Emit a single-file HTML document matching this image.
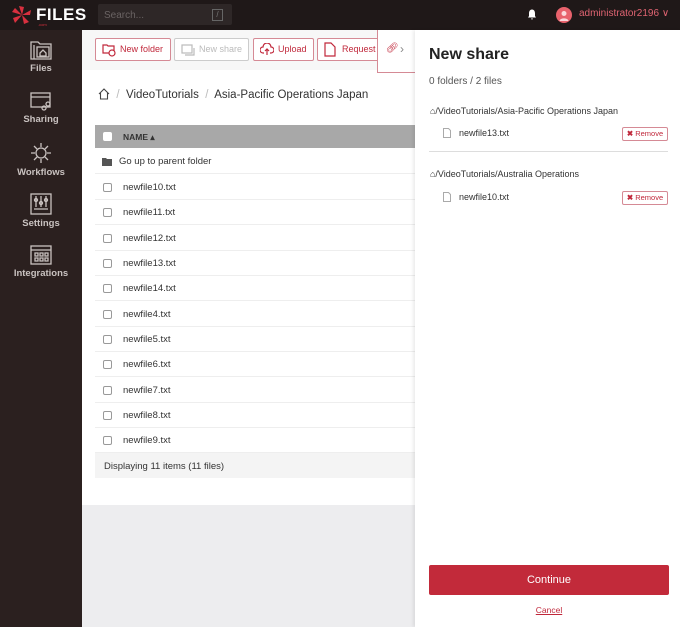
<!DOCTYPE html>
<html><head><meta charset="utf-8"><style>
*{box-sizing:border-box;margin:0;padding:0}
body{width:680px;height:627px;overflow:hidden;font-family:"Liberation Sans",sans-serif;background:#ededef;position:relative;color:#333}
.top{position:absolute;left:0;top:0;width:680px;height:30px;background:#1f1818}
.side{position:absolute;left:0;top:30px;width:82px;height:597px;background:#2b201f}
.nav{position:absolute;left:0;width:82px;text-align:center;color:#c9c2c0;font-size:9.5px;font-weight:bold}
.nav svg{display:block;margin:0 auto 3px}
.main{position:absolute;left:82px;top:30px;width:333px;height:475px;background:#fff}
.tb{position:absolute;left:0;top:0;width:333px;height:40px;background:#f7f7f7}
.btn{position:absolute;top:8px;height:23px;border:1px solid #d58a95;border-radius:2px;background:#fff;color:#c0283b;font-size:9px;line-height:21px;padding-left:24px}
.crumb{position:absolute;left:16px;top:58px;font-size:11.5px;color:#333}
.th{position:absolute;left:13px;top:95px;width:320px;height:23px;background:#a8a8a8}
.row{position:absolute;left:13px;width:320px;height:25px;border-bottom:1px solid #eee;font-size:9.5px;color:#333}
.cb{position:absolute;left:8px;top:8px;width:9px;height:9px;border:1px solid #999;border-radius:2px;background:#fff}
.row span{position:absolute;left:28px;top:7px}
.foot{position:absolute;left:13px;top:422px;width:320px;height:25px;background:#f4f4f4;font-size:9.5px;padding:8px 9px}
.panel{position:absolute;left:415px;top:30px;width:265px;height:597px;background:#fff;box-shadow:-2px 0 3px rgba(0,0,0,.08)}
.rm{position:absolute;right:12px;width:46px;height:14px;border:1px solid #d58a95;border-radius:2px;font-size:7.5px;color:#c0283b;line-height:12px;text-align:center}
</style></head><body>
<div class="top">
<svg style="position:absolute;left:11px;top:5px" width="22" height="20" viewBox="0 0 22 20"><g fill="#d8303f"><path d="M11 10L8 1 13 2z"/><path d="M11 10L20 5 19 10z"/><path d="M11 10L18 17 13 19z"/><path d="M11 10L4 18 2 13z"/><path d="M11 10L1 7 4 3z"/></g></svg>
<div style="position:absolute;left:36px;top:5px;color:#fff;font-weight:bold;font-size:17px;letter-spacing:.5px">FILES</div>
<div style="position:absolute;left:38px;top:22px;color:#d8303f;font-size:4px">.com</div>
<div style="position:absolute;left:98px;top:4px;width:134px;height:21px;background:#2e2727;border-radius:2px;color:#6a6363;font-size:10px;padding:6px 6px">Search...</div>
<div style="position:absolute;left:212px;top:9px;width:11px;height:12px;border:1px solid #666;color:#777;font-size:8px;text-align:center;line-height:10px">/</div>
<svg style="position:absolute;left:527px;top:9px" width="10" height="11" viewBox="0 0 10 11"><path d="M5 0.5C2.8 0.5 2 2.5 2 4.5V7L1 8.5H9L8 7V4.5C8 2.5 7.2.5 5 .5z M4 9.5h2a1 1 0 0 1-2 0z" fill="#fff"/></svg>
<div style="position:absolute;left:556px;top:7px;width:16px;height:16px;border-radius:50%;background:#e8626c"></div>
<svg style="position:absolute;left:559px;top:10px" width="10" height="11" viewBox="0 0 10 11"><circle cx="5" cy="3.5" r="2.5" fill="#fbd8db"/><path d="M0.5 11C1 7.5 9 7.5 9.5 11z" fill="#fbd8db"/></svg>
<div style="position:absolute;left:579px;top:8px;color:#e06472;font-size:10px">administrator2196 ∨</div>
</div>
<div class="side">
<div class="nav" style="top:10px"><svg width="22" height="20" viewBox="0 0 22 20" fill="none" stroke="#c9c2c0" stroke-width="1.3"><path d="M1 2h7l2 2h11v15H1z"/><path d="M4 5v14"/><rect x="7" y="7" width="12" height="10"/><path d="M10 13l3-3 3 3v3h-6z"/></svg>Files</div>
<div class="nav" style="top:61px"><svg width="22" height="20" viewBox="0 0 22 20" fill="none" stroke="#c9c2c0" stroke-width="1.3"><rect x="1" y="2" width="19" height="14"/><path d="M1 6h19"/><circle cx="14" cy="17" r="2"/><circle cx="18" cy="13" r="2"/></svg>Sharing</div>
<div class="nav" style="top:112px"><svg width="22" height="22" viewBox="0 0 22 22" fill="none" stroke="#c9c2c0" stroke-width="1.3"><circle cx="11" cy="11" r="5"/><path d="M11 1v4M11 17v4M1 11h4M17 11h4M4 4l3 3M15 15l3 3M4 18l3-3M15 7l3-3"/></svg>Workflows</div>
<div class="nav" style="top:163px"><svg width="22" height="22" viewBox="0 0 22 22" fill="none" stroke="#c9c2c0" stroke-width="1.3"><rect x="1" y="1" width="20" height="20"/><path d="M6 3v11M11 3v11M16 3v11M4 16h14"/><circle cx="6" cy="7" r="1.5"/><circle cx="11" cy="10" r="1.5"/><circle cx="16" cy="7" r="1.5"/></svg>Settings</div>
<div class="nav" style="top:215px"><svg width="22" height="20" viewBox="0 0 22 20" fill="none" stroke="#c9c2c0" stroke-width="1.3"><rect x="1" y="1" width="20" height="18"/><path d="M1 5h20M5 8h3v3H5zM10 8h3v3h-3zM15 8h3v3h-3zM5 13h3v3H5zM10 13h3v3h-3zM15 13h3v3h-3z"/></svg>Integrations</div>
</div>
<div class="main">
<div class="tb"></div>
<div class="btn" style="left:13px;width:76px"><svg style="position:absolute;left:6px;top:4px" width="14" height="14" viewBox="0 0 14 14" fill="none" stroke="#c0283b" stroke-width="1.2"><path d="M1 2h4l1 1h6v7H1z"/><circle cx="10" cy="10" r="3" fill="#fff"/></svg>New folder</div>
<div class="btn" style="left:92px;width:75px;border-color:#ccc;color:#bbb"><svg style="position:absolute;left:6px;top:4px" width="14" height="14" viewBox="0 0 14 14" fill="none" stroke="#bbb" stroke-width="1.2"><rect x="1" y="2" width="10" height="8"/><path d="M4 12h9V5"/></svg>New share</div>
<div class="btn" style="left:171px;width:61px"><svg style="position:absolute;left:6px;top:4px" width="14" height="14" viewBox="0 0 14 14" fill="none" stroke="#c0283b" stroke-width="1.2"><path d="M4 10H3a3 3 0 0 1 0-6 4 4 0 0 1 8 0 3 3 0 0 1 0 6h-1M7 12V6M5 8l2-2 2 2"/></svg>Upload</div>
<div class="btn" style="left:235px;width:62px"><svg style="position:absolute;left:6px;top:3px" width="12" height="15" viewBox="0 0 12 15" fill="none" stroke="#c0283b" stroke-width="1.2"><path d="M1 1h6l4 4v9H1z"/></svg>Request</div>
<div class="crumb"><svg style="vertical-align:-2px" width="12" height="12" viewBox="0 0 12 12" fill="none" stroke="#444" stroke-width="1.1"><path d="M1 6L6 1l5 5M2.5 5v6h7V5"/></svg>&nbsp; <span style="color:#bbb">/</span>&nbsp; VideoTutorials &nbsp;<span style="color:#bbb">/</span>&nbsp; Asia-Pacific Operations Japan</div>
<div class="th"><div class="cb" style="top:7px;border-color:#fff"></div><span style="position:absolute;left:28px;top:7px;font-size:8.5px;font-weight:bold;color:#333">NAME ▴</span></div>
<div class="row" style="top:119px"><svg style="position:absolute;left:7px;top:8px" width="10" height="9" viewBox="0 0 10 9"><path d="M0 1h4l1 1h5v7H0z" fill="#555"/></svg><span style="left:24px">Go up to parent folder</span></div>
<div class="row" style="top:145px"><div class="cb"></div><span>newfile10.txt</span></div>
<div class="row" style="top:170px"><div class="cb"></div><span>newfile11.txt</span></div>
<div class="row" style="top:196px"><div class="cb"></div><span>newfile12.txt</span></div>
<div class="row" style="top:221px"><div class="cb"></div><span>newfile13.txt</span></div>
<div class="row" style="top:246px"><div class="cb"></div><span>newfile14.txt</span></div>
<div class="row" style="top:272px"><div class="cb"></div><span>newfile4.txt</span></div>
<div class="row" style="top:297px"><div class="cb"></div><span>newfile5.txt</span></div>
<div class="row" style="top:322px"><div class="cb"></div><span>newfile6.txt</span></div>
<div class="row" style="top:348px"><div class="cb"></div><span>newfile7.txt</span></div>
<div class="row" style="top:373px"><div class="cb"></div><span>newfile8.txt</span></div>
<div class="row" style="top:398px"><div class="cb"></div><span>newfile9.txt</span></div>
<div class="foot" style="top:423px">Displaying 11 items (11 files)</div>
</div>
<div style="position:absolute;left:377px;top:30px;width:40px;height:43px;background:#fff;border-left:1px solid #d58a95;border-bottom:1px solid #d58a95"><span style="position:absolute;left:8px;top:13px;color:#c0283b;font-size:10px">🔗︎</span><span style="position:absolute;left:22px;top:12px;color:#888;font-size:12px">›</span></div>
<div class="panel">
<div style="position:absolute;left:14px;top:16px;font-size:16px;font-weight:bold;color:#222">New share</div>
<div style="position:absolute;left:14px;top:46px;font-size:10px;color:#555">0 folders / 2 files</div>
<div style="position:absolute;left:15px;top:76px;font-size:9px;color:#333">⌂/VideoTutorials/Asia-Pacific Operations Japan</div>
<svg style="position:absolute;left:28px;top:98px" width="8" height="10" viewBox="0 0 8 10" fill="none" stroke="#aaa"><path d="M.5.5h5l2 2v7h-7z"/></svg>
<div style="position:absolute;left:44px;top:98px;font-size:9px;color:#333">newfile13.txt</div>
<div class="rm" style="top:97px"><b>✖</b> Remove</div>
<div style="position:absolute;left:14px;top:121px;width:239px;border-top:1px solid #ddd"></div>
<div style="position:absolute;left:15px;top:139px;font-size:9px;color:#333">⌂/VideoTutorials/Australia Operations</div>
<svg style="position:absolute;left:28px;top:162px" width="8" height="10" viewBox="0 0 8 10" fill="none" stroke="#aaa"><path d="M.5.5h5l2 2v7h-7z"/></svg>
<div style="position:absolute;left:44px;top:162px;font-size:9px;color:#333">newfile10.txt</div>
<div class="rm" style="top:161px"><b>✖</b> Remove</div>
<div style="position:absolute;left:14px;top:535px;width:240px;height:30px;background:#c22a3a;border-radius:2px;color:#fff;font-size:11px;text-align:center;line-height:30px">Continue</div>
<div style="position:absolute;left:0;top:575px;width:268px;text-align:center;font-size:8.5px;color:#c0283b;text-decoration:underline">Cancel</div>
</div>
</body></html>
